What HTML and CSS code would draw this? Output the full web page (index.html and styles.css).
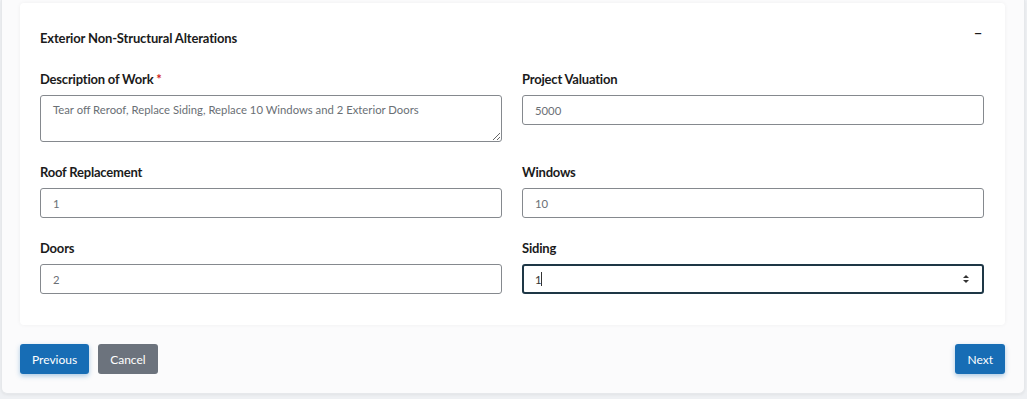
FILE: index.html
```html
<!DOCTYPE html>
<html lang="en">
<head>
    <meta charset="UTF-8">
    <meta name="viewport" content="width=device-width, initial-scale=1.0">
    <title>Exterior Non-Structural Alterations</title>
    <link rel="stylesheet" href="styles.css">
</head>
<body>
    <div class="panel">
        <div class="card">
            <div class="card-header">
                <div class="card-title">Exterior Non-Structural Alterations</div>
                <span class="collapse-toggle">&minus;</span>
            </div>
            <div class="form-grid">
                <div class="field">
                    <label for="description">Description of Work <span class="required">*</span></label>
                    <textarea id="description" class="form-control textarea">Tear off Reroof, Replace Siding, Replace 10 Windows and 2 Exterior Doors</textarea>
                </div>
                <div class="field">
                    <label for="valuation">Project Valuation</label>
                    <input type="text" id="valuation" class="form-control" value="5000">
                </div>
                <div class="field">
                    <label for="roof">Roof Replacement</label>
                    <input type="text" id="roof" class="form-control" value="1">
                </div>
                <div class="field">
                    <label for="windows">Windows</label>
                    <input type="text" id="windows" class="form-control" value="10">
                </div>
                <div class="field">
                    <label for="doors">Doors</label>
                    <input type="text" id="doors" class="form-control" value="2">
                </div>
                <div class="field">
                    <label for="siding">Siding</label>
                    <div class="input-wrap">
                        <input type="text" id="siding" class="form-control focused" value="1">
                        <span class="caret"></span>
                        <svg class="spinner" width="8" height="10" viewBox="0 0 8 10">
                            <path d="M1 4 L4 1 L7 4 Z" fill="#333"/>
                            <path d="M1 6 L4 9 L7 6 Z" fill="#333"/>
                        </svg>
                    </div>
                </div>
            </div>
        </div>
        <div class="actions">
            <div class="actions-left">
                <button class="btn btn-primary">Previous</button>
                <button class="btn btn-secondary">Cancel</button>
            </div>
            <button class="btn btn-primary">Next</button>
        </div>
    </div>
</body>
</html>
```

FILE: styles.css
```css
body {
    margin: 0;
    padding: 0 2px 6px 1px;
    font-family: Lato, "Open Sans", sans-serif;
    background-color: #eef0f3;
    color: #1b1b1b;
}

.panel {
    background-color: #fbfbfc;
    border: 1px solid #e6e8eb;
    border-top: none;
    border-radius: 0 0 6px 6px;
    padding: 3px 19px 19px 18px;
    box-shadow: 0 1px 3px rgba(0, 0, 0, 0.06);
}

.card {
    background-color: #ffffff;
    border-radius: 4px;
    padding: 25px 21px 31px 20px;
    box-shadow: 0 0 4px rgba(0, 0, 0, 0.05);
}

.card-header {
    display: flex;
    justify-content: space-between;
    align-items: center;
    margin-bottom: 25px;
}

.card-title {
    font-size: 13px;
    font-weight: bold;
    letter-spacing: -0.15px;
    line-height: 16px;
    margin-top: 2px;
}

.collapse-toggle {
    font-size: 14px;
    font-weight: bold;
    margin-right: 2px;
    margin-top: -10px;
}

.form-grid {
    display: grid;
    grid-template-columns: 1fr 1fr;
    column-gap: 20px;
    row-gap: 22px;
}

.field label {
    display: block;
    font-size: 13px;
    font-weight: bold;
    line-height: 16px;
    letter-spacing: -0.2px;
    margin-bottom: 8px;
}

.required {
    color: #d11a1a;
}

.form-control {
    box-sizing: border-box;
    width: 100%;
    height: 30px;
    padding: 0 12px;
    border: 1px solid #85898e;
    border-radius: 3px;
    font-family: Lato, "Open Sans", sans-serif;
    font-size: 11.3px;
    color: #6a6f75;
    background-color: #ffffff;
    outline: none;
}

.textarea {
    display: block;
    height: 47px;
    padding: 7px 12px;
    resize: vertical;
    line-height: 14px;
}

.input-wrap {
    position: relative;
}

.focused {
    border: 2px solid #1e3746;
    padding-left: 11px;
    color: #333;
}

.caret {
    position: absolute;
    left: 19px;
    top: 8px;
    width: 1px;
    height: 14px;
    background-color: #333;
}

.spinner {
    position: absolute;
    right: 14px;
    top: 10px;
}

.actions {
    display: flex;
    justify-content: space-between;
    align-items: center;
    margin-top: 19px;
}

.actions-left {
    display: flex;
    gap: 9px;
}

.btn {
    height: 30px;
    padding: 0 12px;
    border: none;
    border-radius: 3px;
    font-family: Lato, "Open Sans", sans-serif;
    font-size: 12px;
    color: #ffffff;
    cursor: pointer;
}

.btn-primary {
    background-color: #176db5;
    box-shadow: 0 2px 5px rgba(23, 109, 181, 0.35);
}

.btn-secondary {
    background-color: #6c737d;
}
```
